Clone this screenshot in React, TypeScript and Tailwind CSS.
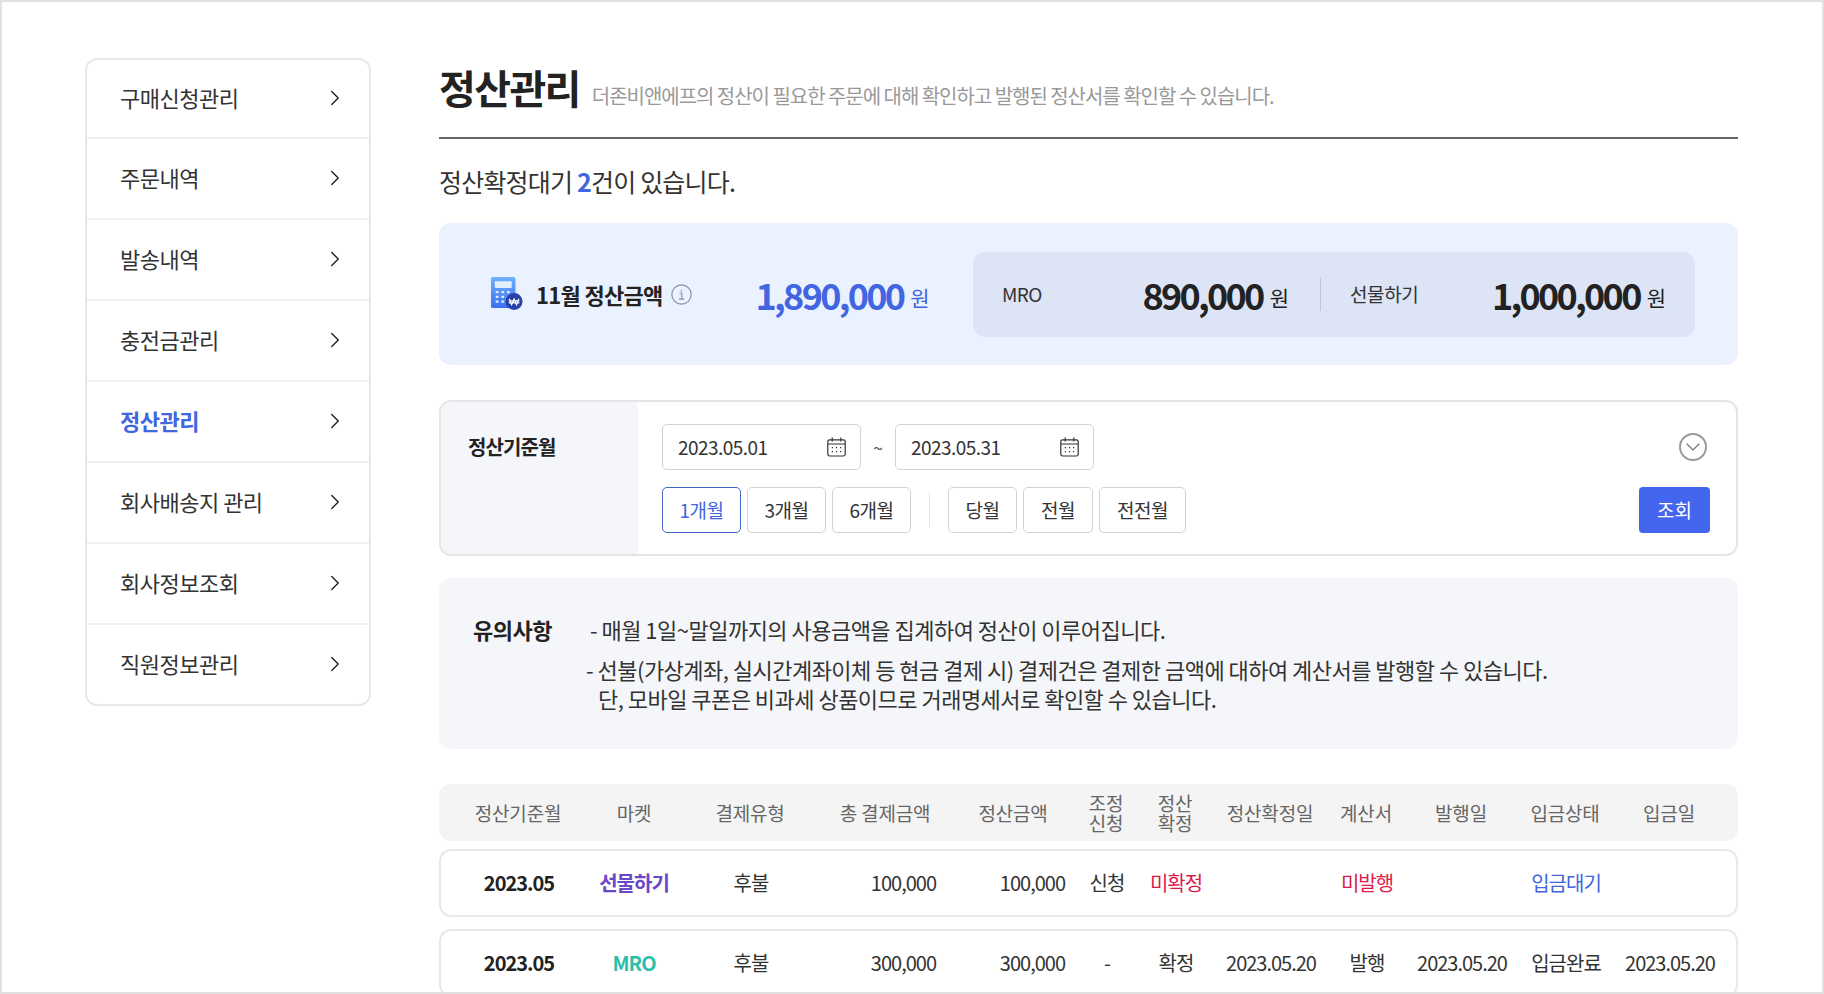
import { ChevronRight, ChevronDown } from "lucide-react";

const menu = ["구매신청관리", "주문내역", "발송내역", "충전금관리", "정산관리", "회사배송지 관리", "회사정보조회", "직원정보관리"];
const grid = "grid grid-cols-[156px_76px_156px_114px_142px_44px_94px_96px_96px_94px_114px_94px] items-center";

function CalendarIcon() {
  return (
    <svg width="19" height="20" viewBox="0 0 19 20" fill="none" stroke="#333" strokeWidth="1.2">
      <rect x="0.8" y="2.8" width="17.4" height="16.2" rx="1.8" />
      <path d="M0.8 7h17.4M5.2 0.4v4M13.8 0.4v4" />
      <path d="M4.8 10.6h1.2M8.9 10.6h1.2M13 10.6h1.2M4.8 14.6h1.2M8.9 14.6h1.2M13 14.6h1.2" strokeWidth="1.4" />
    </svg>
  );
}

function CalcIcon() {
  return (
    <svg width="32" height="34" viewBox="0 0 34 36">
      <defs>
        <linearGradient id="calc" x1="0" y1="0" x2="0" y2="1">
          <stop offset="0" stopColor="#6fb1fb" />
          <stop offset="1" stopColor="#3a6ff0" />
        </linearGradient>
      </defs>
      <rect x="0" y="0" width="26" height="33" rx="2" fill="url(#calc)" />
      <rect x="4" y="4.5" width="18" height="7" rx="1" fill="#e4effe" />
      <path d="M5 16h3M11 16h3M17 16h3M5 21h3M11 21h3M5 26h3M11 26h3" stroke="#dfeaff" strokeWidth="2.4" />
      <circle cx="24.5" cy="26" r="9" fill="#2741a8" />
      <path d="M19.5 23l2.4 6.4 2.6-6 2.6 6 2.4-6.4M18.8 25.4h11.4M18.8 27.4h11.4" fill="none" stroke="#fff" strokeWidth="1.3" />
    </svg>
  );
}

function Won({ className }: { className: string }) {
  return <span className={`ml-[7px] mt-[7px] text-[21px] font-normal tracking-normal ${className}`}>원</span>;
}

function PeriodButton({ label, active, width }: { label: string; active?: boolean; width: string }) {
  return (
    <button className={`h-[46px] rounded-[5px] border-[1.5px] text-[19px] tracking-[-0.5px] ${width} ${active ? "border-[#4166c4] text-[#4166e0]" : "border-[#d2d2d2] text-[#333]"}`}>
      {label}
    </button>
  );
}

function DateInput({ value }: { value: string }) {
  return (
    <div className="flex h-[46px] w-[199px] items-center justify-between rounded-[5px] border-[1.5px] border-[#d2d2d2] pl-[15px] pr-[14px] text-[19px] tracking-[-0.55px] text-[#333]">
      <span>{value}</span>
      <CalendarIcon />
    </div>
  );
}

export default function App() {
  return (
    <div className="flex h-[994px] w-[1824px] items-start gap-[68px] overflow-hidden border-2 border-[#e0e0e0] bg-white pl-[83px] pt-[56px] font-['Noto_Sans_CJK_KR','Noto_Sans',sans-serif] text-[#222]">
      {/* Side menu */}
      <aside className="w-[286px] shrink-0 overflow-hidden rounded-[12px] border-2 border-[#e8e8e8]">
        {menu.map((name) => (
          <div key={name} className={`flex h-[81px] items-center justify-between border-t-2 border-[#efefef] pb-[2px] pl-[33px] pr-[21px] text-[22px] tracking-[-0.5px] first:h-[77px] first:border-t-0 last:h-[81px] ${name === "정산관리" ? "font-bold text-[#4166e0]" : "text-[#333]"}`}>
            <span>{name}</span>
            <ChevronRight className="size-[26px] text-[#222]" strokeWidth={1.3} />
          </div>
        ))}
      </aside>

      <main className="w-[1299px] shrink-0">
        {/* Title */}
        <div className="flex h-[81px] items-baseline gap-[12px] border-b-2 border-[#666]">
          <h1 className="-mt-[1px] text-[40px] font-bold tracking-[-1.6px] text-[#222]">정산관리</h1>
          <p className="text-[20px] tracking-[-1.03px] text-[#999]">더존비앤에프의 정산이 필요한 주문에 대해 확인하고 발행된 정산서를 확인할 수 있습니다.</p>
        </div>

        <p className="mt-[24px] text-[25px] leading-[36px] tracking-[-0.8px] text-[#333]">
          정산확정대기 <b className="text-[#4166e0]">2</b>건이 있습니다.
        </p>

        {/* Summary */}
        <section className="mt-[24px] flex h-[142px] items-center rounded-[12px] bg-[#ebf2ff] pl-[52px] pr-[43px]">
          <CalcIcon />
          <span className="ml-[13px] text-[22px] font-bold tracking-[-0.7px]">11월 정산금액</span>
          <svg className="ml-[8px]" width="21" height="21" viewBox="0 0 20 20" fill="none" stroke="#8b8f99" strokeWidth="1.1">
            <circle cx="10" cy="10" r="9.2" />
            <path d="M8 8.6h2.3v5.6M7.6 14.4h5M10 5.4v1.4" />
          </svg>
          <b className="ml-[64px] text-[36px] tracking-[-2.7px] text-[#4166e0]">1,890,000</b>
          <Won className="text-[#4166e0]" />
          <div className="ml-auto flex h-[85px] w-[722px] items-center rounded-[12px] bg-[#dce4f5] pl-[29px] pr-[29px]">
            <div className="flex w-[287px] items-center">
              <span className="text-[19px] tracking-[-0.6px] text-[#333]">MRO</span>
              <b className="ml-auto text-[36px] tracking-[-2.7px]">890,000</b>
              <Won className="" />
            </div>
            <div className="ml-[31px] mr-[29px] h-[34px] w-px bg-[#bcc6dc]" />
            <span className="text-[19px] tracking-[-0.4px] text-[#333]">선물하기</span>
            <b className="ml-auto text-[36px] tracking-[-2.7px]">1,000,000</b>
            <Won className="" />
          </div>
        </section>

        {/* Filter */}
        <section className="mt-[35px] flex h-[156px] overflow-hidden rounded-[12px] border-2 border-[#e5e5e5]">
          <div className="w-[197px] shrink-0 bg-[#f5f6fa] pl-[27px] pt-[30px] text-[20px] font-bold tracking-[-0.9px]">정산기준월</div>
          <div className="flex flex-1 flex-col gap-[17px] pl-[24px] pr-[26px] pt-[22px]">
            <div className="flex items-center">
              <DateInput value="2023.05.01" />
              <span className="mx-[12px] text-[18px] text-[#555]">~</span>
              <DateInput value="2023.05.31" />
              <span className="ml-auto mr-[3px] flex size-[28px] items-center justify-center rounded-full border-2 border-[#999]">
                <ChevronDown className="size-[24px] text-[#777]" strokeWidth={1.2} />
              </span>
            </div>
            <div className="flex items-center gap-[6px]">
              <PeriodButton label="1개월" active width="w-[79px]" />
              <PeriodButton label="3개월" width="w-[79px]" />
              <PeriodButton label="6개월" width="w-[79px]" />
              <div className="mx-[12px] h-[34px] w-px bg-[#e2e2e2]" />
              <PeriodButton label="당월" width="w-[69px]" />
              <PeriodButton label="전월" width="w-[70px]" />
              <PeriodButton label="전전월" width="w-[87px]" />
              <button className="ml-auto h-[46px] w-[71px] rounded-[4px] bg-[#4465ed] text-[19px] text-white">조회</button>
            </div>
          </div>
        </section>

        {/* Notice */}
        <section className="mt-[22px] flex h-[171px] rounded-[12px] bg-[#f5f6fa] pl-[34px] pt-[37px] text-[22px] leading-[29px] tracking-[-0.52px] text-[#333]">
          <b className="w-[117px] shrink-0 text-[#222]">유의사항</b>
          <div>
            <p>- 매월 1일~말일까지의 사용금액을 집계하여 정산이 이루어집니다.</p>
            <p className="mt-[11px] -ml-[4px]">- 선불(가상계좌, 실시간계좌이체 등 현금 결제 시) 결제건은 결제한 금액에 대하여 계산서를 발행할 수 있습니다.</p>
            <p className="ml-[8px]">단, 모바일 쿠폰은 비과세 상품이므로 거래명세서로 확인할 수 있습니다.</p>
          </div>
        </section>

        {/* Table */}
        <div className={`mt-[35px] h-[57px] rounded-[12px] bg-[#f4f4f4] pl-[1px] text-center text-[19px] leading-[20px] tracking-[-0.2px] text-[#666] ${grid}`}>
          <span>정산기준월</span>
          <span>마켓</span>
          <span>결제유형</span>
          <span>총 결제금액</span>
          <span>정산금액</span>
          <span>조정<br />신청</span>
          <span>정산<br />확정</span>
          <span>정산확정일</span>
          <span>계산서</span>
          <span>발행일</span>
          <span>입금상태</span>
          <span>입금일</span>
        </div>

        <div className={`mt-[8px] h-[68px] rounded-[12px] border-2 border-[#e8e8e8] text-center text-[20px] tracking-[-1px] text-[#333] ${grid}`}>
          <b className="text-[#222]">2023.05</b>
          <b className="-ml-[2px] text-[#6b46c8]">선물하기</b>
          <span>후불</span>
          <span className="pr-[7px] text-right">100,000</span>
          <span className="pr-[20px] text-right">100,000</span>
          <span>신청</span>
          <span className="text-[#e0184d]">미확정</span>
          <span />
          <span className="text-[#e0184d]">미발행</span>
          <span />
          <span className="text-[#4166e0]">입금대기</span>
          <span />
        </div>

        <div className={`mt-[12px] h-[68px] rounded-[12px] border-2 border-[#e8e8e8] text-center text-[20px] tracking-[-1px] text-[#333] ${grid}`}>
          <b className="text-[#222]">2023.05</b>
          <b className="-ml-[2px] text-[#2fbfa8]">MRO</b>
          <span>후불</span>
          <span className="pr-[7px] text-right">300,000</span>
          <span className="pr-[20px] text-right">300,000</span>
          <span>-</span>
          <span>확정</span>
          <span>2023.05.20</span>
          <span>발행</span>
          <span>2023.05.20</span>
          <span>입금완료</span>
          <span>2023.05.20</span>
        </div>
      </main>
    </div>
  );
}
